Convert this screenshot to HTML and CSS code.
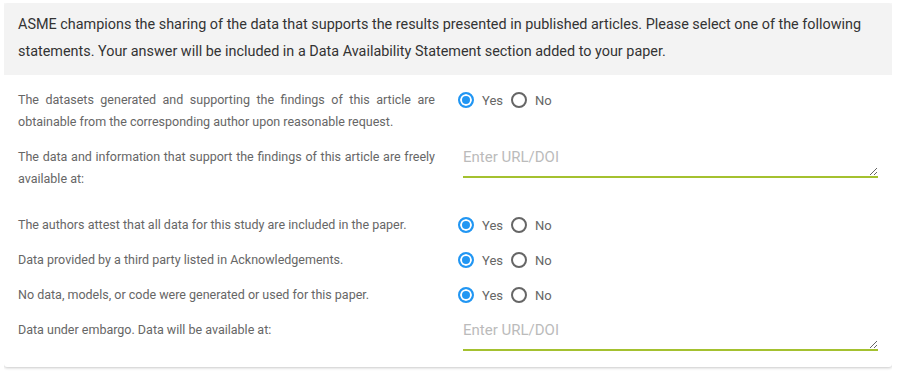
FILE: index.html
```html
<html>
<head>
<meta charset="UTF-8" />
<title>Data Availability Statement</title>
<link rel="stylesheet" href="styles.css">
</head>
<body>
<div class="card">
  <div class="card-head">
    ASME champions the sharing of the data that supports the results presented in published articles. Please select one of the following statements. Your answer will be included in a Data Availability Statement section added to your paper.
  </div>
  <form class="card-body">
    <div class="row">
      <div class="label">The datasets generated and supporting the findings of this article are obtainable from the corresponding author upon reasonable request.</div>
      <div class="choice">
        <label><input type="radio" name="q1" checked> Yes</label>
        <label><input type="radio" name="q1"> No</label>
      </div>
    </div>
    <div class="row row-text">
      <div class="label">The data and information that support the findings of this article are freely available at:</div>
      <div class="field"><textarea placeholder="Enter URL/DOI"></textarea></div>
    </div>
    <div class="row">
      <div class="label">The authors attest that all data for this study are included in the paper.</div>
      <div class="choice">
        <label><input type="radio" name="q3" checked> Yes</label>
        <label><input type="radio" name="q3"> No</label>
      </div>
    </div>
    <div class="row">
      <div class="label">Data provided by a third party listed in Acknowledgements.</div>
      <div class="choice">
        <label><input type="radio" name="q4" checked> Yes</label>
        <label><input type="radio" name="q4"> No</label>
      </div>
    </div>
    <div class="row">
      <div class="label">No data, models, or code were generated or used for this paper.</div>
      <div class="choice">
        <label><input type="radio" name="q5" checked> Yes</label>
        <label><input type="radio" name="q5"> No</label>
      </div>
    </div>
    <div class="row row-text">
      <div class="label">Data under embargo. Data will be available at:</div>
      <div class="field"><textarea placeholder="Enter URL/DOI"></textarea></div>
    </div>
  </form>
</div>
</body>
</html>
```

FILE: styles.css
```css
body {
  margin: 3px 8px 0 4px;
  font-family: Roboto, 'Liberation Sans', sans-serif;
  background: #fff;
}

.card {
  width: 888px;
  background: #fff;
  border-radius: 3px;
  box-shadow: 0 1px 3px rgba(0, 0, 0, 0.22);
  overflow: hidden;
}

.card-head {
  background: #f3f3f3;
  color: #333;
  font-size: 14.4px;
  line-height: 27px;
  padding: 8px 14px 10px;
}

.card-body {
  margin: 0;
  padding: 14px 14px 16px;
  display: flex;
  flex-direction: column;
  gap: 13px;
}

.row {
  display: flex;
  gap: 23px;
}

.row-text {
  margin-bottom: 11px;
}

.row-text:last-child {
  margin-bottom: 0;
}

.label {
  width: 417px;
  flex-shrink: 0;
  color: #666;
  font-size: 12.5px;
  line-height: 22px;
  text-align: justify;
}

.choice {
  display: flex;
  gap: 8px;
  height: 22px;
  align-items: center;
}

.choice label {
  display: flex;
  align-items: center;
  gap: 8px;
  color: #666;
  font-size: 13px;
  cursor: pointer;
}

.choice input {
  appearance: none;
  -webkit-appearance: none;
  margin: 0;
  width: 16px;
  height: 16px;
  border: 2px solid #666;
  border-radius: 50%;
  box-sizing: border-box;
  background: #fff;
}

.choice input:checked {
  border-color: #2196f3;
  box-shadow: inset 0 0 0 2px #fff;
  background: #2196f3;
}

.field {
  flex-grow: 1;
  padding-left: 5px;
}

.field textarea {
  display: block;
  width: 100%;
  height: 32px;
  box-sizing: border-box;
  border: none;
  border-bottom: 2px solid #a4c12f;
  outline: none;
  padding: 1px 0 0;
  font-family: Roboto, 'Liberation Sans', sans-serif;
  font-size: 15px;
  line-height: 20px;
  color: #444;
  resize: vertical;
}

.field textarea::placeholder {
  color: #bbb;
}
```
